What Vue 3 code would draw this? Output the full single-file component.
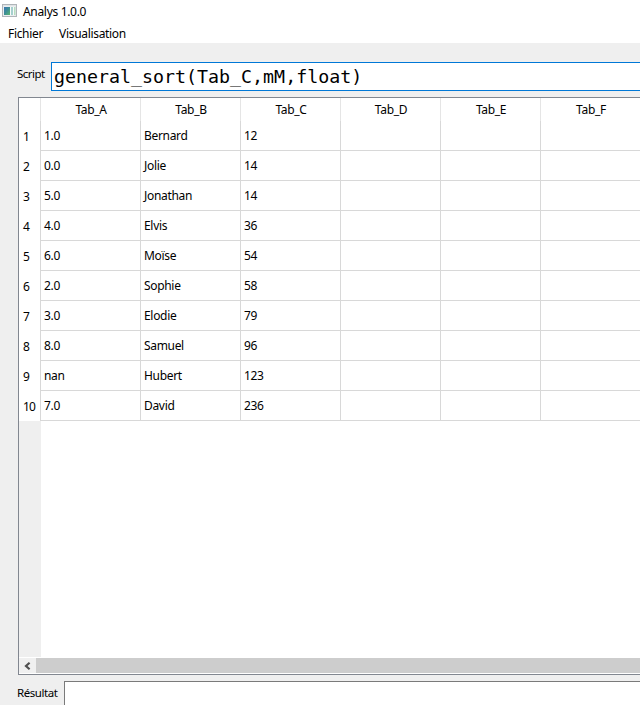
<script setup>
const columns = ['Tab_A', 'Tab_B', 'Tab_C', 'Tab_D', 'Tab_E', 'Tab_F']
const rows = [
  ['1.0', 'Bernard', '12'],
  ['0.0', 'Jolie', '14'],
  ['5.0', 'Jonathan', '14'],
  ['4.0', 'Elvis', '36'],
  ['6.0', 'Moïse', '54'],
  ['2.0', 'Sophie', '58'],
  ['3.0', 'Elodie', '79'],
  ['8.0', 'Samuel', '96'],
  ['nan', 'Hubert', '123'],
  ['7.0', 'David', '236'],
]
</script>

<template>
  <div class="window">
    <header class="titlebar">
      <svg class="app-icon" width="16" height="16" viewBox="0 0 16 16">
        <defs>
          <linearGradient id="pane" x1="0" y1="0" x2="1" y2="1">
            <stop offset="0" stop-color="#3c74b4" />
            <stop offset="0.5" stop-color="#3d8f94" />
            <stop offset="1" stop-color="#5db86c" />
          </linearGradient>
        </defs>
        <rect x="0.5" y="0.5" width="14" height="12" fill="#dfe3e5" stroke="#b0b5b9" />
        <rect x="1.5" y="2.5" width="12" height="9" fill="#f8fafa" />
        <rect x="2" y="3" width="6" height="8" fill="url(#pane)" />
        <rect x="9" y="3" width="2" height="8" fill="#a5d0cf" />
        <rect x="12" y="3" width="1.5" height="8" fill="#b5dcc0" />
      </svg>
      <span>Analys 1.0.0</span>
    </header>
    <nav class="menubar">
      <span class="menu-file">Fichier</span>
      <span class="menu-view">Visualisation</span>
    </nav>
    <main class="content">
      <div class="script-row">
        <label class="script-label">Script</label>
        <div class="script-field">general_sort(Tab_C,mM,float)</div>
      </div>
      <section class="table-frame">
        <div class="table-head">
          <div class="corner"></div>
          <div v-for="c in columns" :key="c" class="col-head">{{ c }}</div>
        </div>
        <div v-for="(row, i) in rows" :key="i" class="table-row">
          <div class="row-head">{{ i + 1 }}</div>
          <div v-for="(c, j) in columns" :key="c" class="cell">{{ row[j] }}</div>
        </div>
        <div class="table-rest"><div class="gutter"></div></div>
        <div class="scrollbar">
          <div class="arrow">
            <svg width="7" height="8" viewBox="0 0 7 8">
              <path d="M5.6 0.8 2 4l3.6 3.2" fill="none" stroke="#505050" stroke-width="2.2" />
            </svg>
          </div>
          <div class="thumb"></div>
        </div>
      </section>
      <div class="result-row">
        <label class="result-label">Résultat</label>
        <div class="result-field"></div>
      </div>
    </main>
  </div>
</template>

<style>
body {
  overflow: hidden;
}
</style>

<style scoped>
.window {
  width: 640px;
  height: 705px;
  overflow: hidden;
  display: flex;
  flex-direction: column;
  background: #fff;
  color: #000;
  font: 12px/16px "Noto Sans", "Open Sans", sans-serif;
  letter-spacing: -0.32px;
  white-space: nowrap;
}
.window * {
  box-sizing: border-box;
}
.titlebar {
  height: 24px;
  flex: none;
  display: flex;
  gap: 5px;
  padding: 4px 0 0 2px;
}
.app-icon {
  flex: none;
}
.menubar {
  height: 19px;
  flex: none;
  display: flex;
  gap: 16px;
  padding: 2px 0 0 8px;
}
.content {
  flex: 1;
  background: #efefef;
  padding: 19px 0 0 18px;
}
.script-row {
  display: flex;
  height: 35px;
}
.script-label {
  width: 33px;
  padding-top: 4px;
  margin-left: -1px;
  flex: none;
  font-size: 11.5px;
  letter-spacing: -0.5px;
}
.script-field {
  margin-left: 1px;
  flex: 1;
  height: 29px;
  border: 1px solid #0078d7;
  border-right: 0;
  background: #fff;
  padding-left: 2px;
  font: 18.3px/28px "DejaVu Sans Mono", monospace;
  letter-spacing: 0;
}
.table-frame {
  height: 578px;
  border: 1px solid #828790;
  border-right: 0;
  background: #fff;
  display: flex;
  flex-direction: column;
  overflow: hidden;
}
.table-head,
.table-row {
  display: flex;
  flex: none;
}
.table-head {
  height: 23px;
}
.corner {
  width: 22px;
  flex: none;
  border-right: 1px solid #e5e5e5;
}
.col-head {
  width: 100px;
  flex: none;
  padding-left: 1px;
  border-right: 1px solid #e5e5e5;
  text-align: center;
  line-height: 24px;
}
.table-row {
  height: 30px;
}
.row-head {
  width: 22px;
  flex: none;
  padding-left: 4px;
  border-right: 1px solid #d8d8d8;
  line-height: 31px;
  letter-spacing: -0.8px;
}
.cell {
  width: 100px;
  flex: none;
  padding-left: 3px;
  border-right: 1px solid #d8d8d8;
  border-bottom: 1px solid #d8d8d8;
  line-height: 29px;
}
.table-rest {
  flex: 1;
}
.gutter {
  width: 22px;
  height: 100%;
  background: #efefef;
}
.scrollbar {
  height: 17px;
  flex: none;
  display: flex;
  background: #f0f0f0;
  border-top: 1px solid #fff;
  border-bottom: 1px solid #fff;
}
.arrow {
  width: 17px;
  display: flex;
  align-items: center;
  justify-content: center;
}
.thumb {
  flex: 1;
  background: #cdcdcd;
}
.result-row {
  display: flex;
  padding-top: 6px;
}
.result-label {
  width: 47px;
  margin-left: -1px;
  padding-top: 4px;
  flex: none;
  font-size: 11.5px;
  letter-spacing: -0.45px;
}
.result-field {
  flex: 1;
  height: 30px;
  border: 1px solid #7a7a7a;
  border-right: 0;
  background: #fff;
}
</style>
